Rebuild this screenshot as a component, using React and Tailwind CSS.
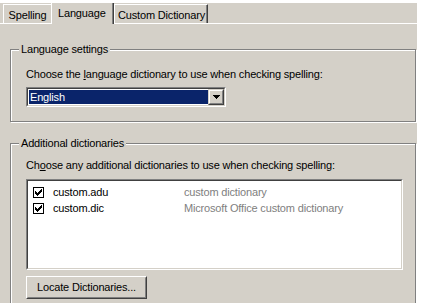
import React from 'react';

const font = { fontFamily: '"Liberation Sans", Arial, sans-serif' };

function Check() {
    // classic 7x7 tick, one 3px column per x
    const cols = [2, 3, 4, 3, 2, 1, 0];
    return (
        <svg width="7" height="7" viewBox="0 0 7 7" shapeRendering="crispEdges">
            {cols.map((y, x) => (
                <rect key={x} x={x} y={y} width="1" height="3" fill="#000" />
            ))}
        </svg>
    );
}

function CheckBox() {
    return (
        <div className="w-[11px] h-[11px] border border-black bg-white flex items-center justify-center shrink-0">
            <Check />
        </div>
    );
}

function GroupBox({ title, className, children }) {
    return (
        <div className={`relative border border-[#808080] shadow-[inset_1px_1px_0_#fff,1px_1px_0_#fff] ${className}`}>
            <span className="absolute left-[8px] -top-[7px] px-[2px] bg-[#d4d0c8] leading-[13px]">{title}</span>
            {children}
        </div>
    );
}

const items = [
    { name: 'custom.adu', desc: 'custom dictionary' },
    { name: 'custom.dic', desc: 'Microsoft Office custom dictionary' },
];

export default function App() {
    return (
        <div
            className="w-[424px] h-[308px] bg-white pt-[3px] overflow-hidden text-[11px] leading-[13px] tracking-[-0.17px] text-black"
            style={font}
        >
            <div className="w-[417px] h-[300px] bg-[#d4d0c8] flex flex-col overflow-hidden">
                {/* tabs */}
                <div className="h-[20px] flex items-end pl-[3px] shrink-0">
                    <div className="w-[48px] h-[19px] border-l border-t border-white pt-[4px] text-center">
                        Spelling
                    </div>
                    <div className="relative top-[1px] z-10 w-[63px] h-[22px] bg-[#d4d0c8] border-l border-t border-white shadow-[inset_-1px_0_0_#808080] border-r border-r-[#404040] pt-[4px] pl-[6px]">
                        Language
                    </div>
                    <div className="w-[94px] h-[19px] border-l border-t border-white shadow-[inset_-1px_0_0_#808080] border-r border-r-[#404040] pt-[4px] pl-[3px]">
                        Custom Dictionary
                    </div>
                </div>

                {/* page */}
                <div className="flex-1 border-t border-white pt-[25px] pl-[10px]">
                    <GroupBox title="Language settings" className="w-[406px] h-[73px] pt-[18px] pl-[15px]">
                        <div>
                            Choose the <span className="underline">l</span>anguage dictionary to use when checking spelling:
                        </div>
                        <div className="mt-[6px] w-[200px] h-[20px] border border-t-[#808080] border-l-[#808080] border-b-white border-r-white">
                            <div className="h-full border border-t-[#404040] border-l-[#404040] border-b-[#d4d0c8] border-r-[#d4d0c8] bg-white flex">
                                <div className="flex-1 m-[1px] mr-0 bg-[#0a246a] text-white pl-[1px] leading-[14px]">English</div>
                                <div className="w-[16px] h-[16px] border border-t-[#d4d0c8] border-l-[#d4d0c8] border-b-[#404040] border-r-[#404040]">
                                    <div className="h-full bg-[#d4d0c8] border border-t-white border-l-white border-b-[#808080] border-r-[#808080] flex items-center justify-center">
                                        <svg width="7" height="4" viewBox="0 0 7 4" shapeRendering="crispEdges">
                                            <path d="M0 0h7v1H0zM1 1h5v1H1zM2 2h3v1H2zM3 3h1v1H3z" fill="#000" />
                                        </svg>
                                    </div>
                                </div>
                            </div>
                        </div>
                    </GroupBox>

                    <GroupBox title="Additional dictionaries" className="mt-[21px] w-[406px] h-[220px] pt-[15px] pl-[15px]">
                        <div>
                            Ch<span className="underline">o</span>ose any additional dictionaries to use when checking spelling:
                        </div>
                        <div className="mt-[7px] w-[377px] h-[91px] border border-t-[#808080] border-l-[#808080] border-b-white border-r-white">
                            <div className="h-full bg-white border border-t-[#404040] border-l-[#404040] border-b-[#d4d0c8] border-r-[#d4d0c8] pt-[3px] pl-[5px]">
                                {items.map(it => (
                                    <div key={it.name} className="h-[16px] flex items-center">
                                        <CheckBox />
                                        <span className="ml-[9px] w-[131px]">{it.name}</span>
                                        <span className="text-[#808080]">{it.desc}</span>
                                    </div>
                                ))}
                            </div>
                        </div>
                        <button className="mt-[6px] w-[121px] h-[23px] border border-t-white border-l-white border-b-[#404040] border-r-[#404040] block">
                            <div className="h-full border border-t-[#d4d0c8] border-l-[#d4d0c8] border-b-[#808080] border-r-[#808080] flex items-center justify-center">
                                Locate Dictionaries...
                            </div>
                        </button>
                    </GroupBox>
                </div>
            </div>
        </div>
    );
}
